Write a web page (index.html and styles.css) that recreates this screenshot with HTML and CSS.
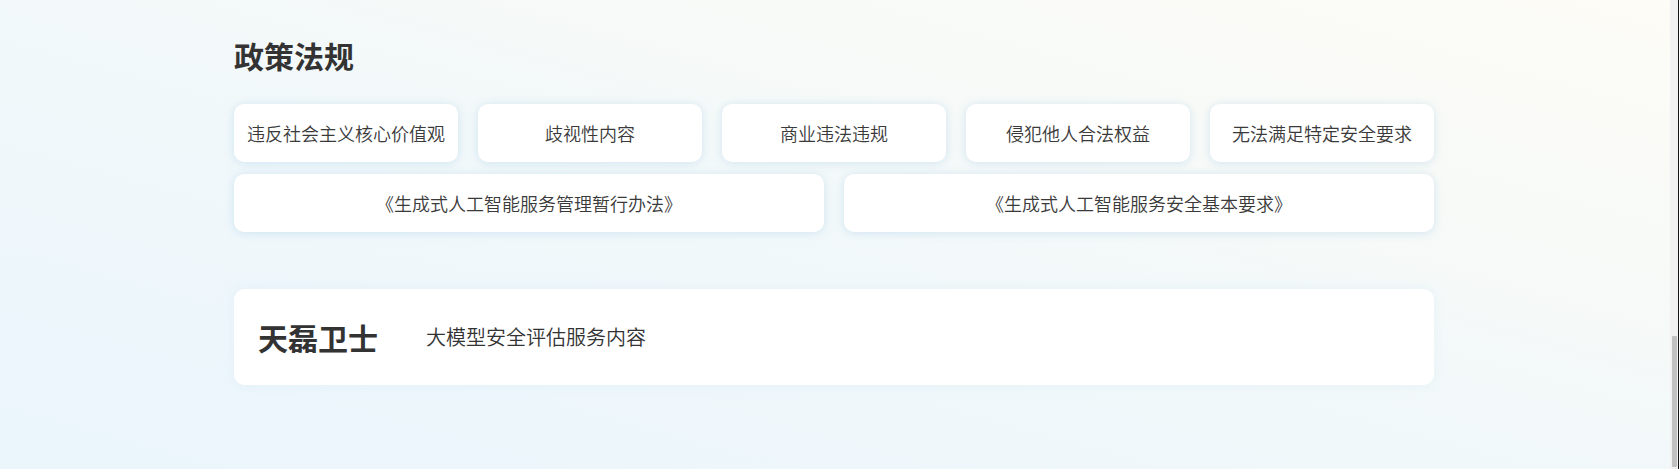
FILE: index.html
```html
<!DOCTYPE html>
<html lang="zh-CN">
<head>
<meta charset="utf-8">
<title>政策法规</title>
<link rel="stylesheet" href="styles.css">
</head>
<body>
<div class="viewport">
  <main class="page">
    <div class="container">
      <section class="policy">
        <h2 class="section-title">政策法规</h2>
        <div class="tag-grid tag-grid-5">
          <div class="tag">违反社会主义核心价值观</div>
          <div class="tag">歧视性内容</div>
          <div class="tag">商业违法违规</div>
          <div class="tag">侵犯他人合法权益</div>
          <div class="tag">无法满足特定安全要求</div>
        </div>
        <div class="tag-grid tag-grid-2">
          <div class="tag">《生成式人工智能服务管理暂行办法》</div>
          <div class="tag">《生成式人工智能服务安全基本要求》</div>
        </div>
      </section>
      <section class="product-card">
        <h3 class="product-name">天磊卫士</h3>
        <p class="product-desc">大模型安全评估服务内容</p>
      </section>
    </div>
  </main>
  <div class="scrollbar"><div class="scrollbar-thumb"></div></div>
  <div class="window-edge"></div>
</div>
</body>
</html>
```

FILE: styles.css
```css
* { box-sizing: border-box; }
html, body { margin: 0; padding: 0; }
body {
  font-family: "Noto Sans CJK SC", "Noto Sans", "Liberation Sans", sans-serif;
  color: #333;
}
.viewport {
  display: flex;
  height: 469px;
  overflow: hidden;
}
.page {
  flex: 1;
  background: linear-gradient(to top right, #eaf5fc 0%, #f1f8fa 45%, #f8faf7 75%, #fdfcf7 100%);
  padding: 34px 2px 0 0;
}
.container {
  width: 1200px;
  margin: 0 auto;
}
.section-title {
  margin: 0 0 28px;
  font-size: 30px;
  line-height: 42px;
  font-weight: 700;
  color: #333;
}
.tag-grid {
  display: grid;
  column-gap: 20px;
}
.tag-grid-5 { grid-template-columns: repeat(5, 1fr); }
.tag-grid-2 { grid-template-columns: repeat(2, 1fr); margin-top: 12px; }
.tag {
  height: 58px;
  display: flex;
  align-items: center;
  justify-content: center;
  background: #fff;
  border-radius: 10px;
  font-size: 18px;
  font-weight: 350;
  color: #3a3a3a;
  white-space: nowrap;
  box-shadow: 0 1px 10px rgba(150, 195, 228, 0.38);
}
.product-card {
  margin-top: 57px;
  height: 96px;
  display: flex;
  align-items: center;
  padding: 0 24px;
  background: #fff;
  border-radius: 11px;
  box-shadow: 0 0 12px rgba(200, 228, 245, 0.35);
}
.product-name {
  margin: 0;
  font-size: 30px;
  font-weight: 700;
  color: #333;
  line-height: 40px;
}
.product-desc {
  margin: 0 0 0 48px;
  font-size: 20px;
  font-weight: 350;
  color: #333;
  line-height: 28px;
}
.scrollbar {
  width: 8px;
  background: #f1f1f1;
  display: flex;
  flex-direction: column;
  justify-content: flex-end;
  padding: 0 1px 2px 2px;
}
.scrollbar-thumb {
  height: 131px;
  background: #c1c1c1;
  border-radius: 1px;
}
.window-edge {
  width: 1px;
  background: #111;
}
```
